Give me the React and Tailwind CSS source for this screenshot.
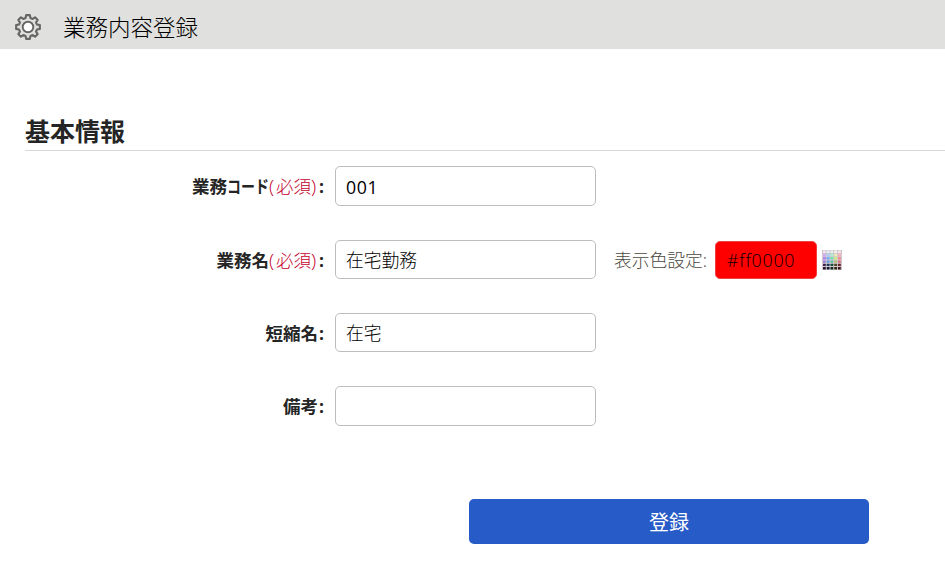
import React, { useState } from 'react';

// 8 teeth, outlined body with a white hole in the middle
const TEETH = 8;
const gearPoint = (radius, degrees) => {
  const rad = ((degrees - 90) * Math.PI) / 180;
  return `${(14 + radius * Math.cos(rad)).toFixed(2)},${(14 + radius * Math.sin(rad)).toFixed(2)}`;
};
const gearOutline = Array.from({ length: TEETH }, (_, i) => {
  const a = (i * 360) / TEETH;
  return [gearPoint(9.3, a - 15), gearPoint(12, a - 9), gearPoint(12, a + 9), gearPoint(9.3, a + 15)].join(' ');
}).join(' ');

const GearIcon = () => (
  <svg className="w-7 h-7 shrink-0" viewBox="0 0 28 28" fill="none" stroke="#666" strokeLinejoin="round">
    <polygon points={gearOutline} strokeWidth="2.1" />
    <circle cx="14" cy="14" r="5.3" fill="#fff" strokeWidth="1.9" />
  </svg>
);

const PALETTE = [
  ['#f0e6f2', '#e6f0f4', '#e4f4ea', '#f4f2e4', '#f4e4e4'],
  ['#cfaef2', '#a8d0f8', '#b0eed2', '#f2ecb0', '#f6b0b6'],
  ['#b080f4', '#6cb0fa', '#70e4a8', '#d2ec80', '#fa8a8a'],
  ['#9a80dc', '#5c9cdc', '#5cc49c', '#bcc070', '#dc6c74'],
  ['#3a2048', '#1c3858', '#185038', '#504820', '#682028'],
  ['#281428', '#101c30', '#102a1c', '#2c280c', '#38100e'],
];

const PaletteIcon = () => (
  <svg className="w-5 h-5 shrink-0" viewBox="0 0 20 20">
    <rect width="20" height="20" fill="#cfc6d0" />
    {PALETTE.map((row, y) =>
      row.map((color, x) => (
        <rect key={`${x}-${y}`} x={1 + x * 3.75} y={0.5 + y * 3.3} width="2.8" height="2.4" rx="0.5" fill={color} />
      ))
    )}
  </svg>
);

const inputBase = 'border rounded-[5px] outline-none';

const FormRow = ({ label, required, height, inputClass = 'font-light', value, onChange, children }) => (
  <div className="flex items-center">
    <label className="w-[325px] pr-px text-right text-[17.5px] leading-6 font-bold text-[#252525] whitespace-nowrap">
      {label}
      {required && (
        <span className="font-light text-[#c4002c]">
          <span className="inline-block w-[7px] text-left text-[19px] leading-5">(</span>
          必須
          <span className="inline-block w-[7px] text-left text-[19px] leading-5">)</span>
        </span>
      )}
      <span className="inline-block w-[6px]">:</span>
    </label>
    <input
      type="text"
      value={value}
      onChange={(e) => onChange(e.target.value)}
      className={`${inputBase} ${height} ${inputClass} ml-[10px] w-[261px] px-[10px] text-[17.75px] text-black bg-white border-[#bdbdbd]`}
    />
    {children}
  </div>
);

const App = () => {
  const [form, setForm] = useState({ code: '001', name: '在宅勤務', shortName: '在宅', note: '' });
  const [color, setColor] = useState('#ff0000');

  const update = (key) => (value) => setForm({ ...form, [key]: value });

  return (
    <div className="h-[579px] overflow-hidden bg-white font-['Open_Sans','Noto_Sans_CJK_JP',sans-serif]">
      {/* Page header */}
      <header className="flex items-center h-[49px] pl-[14px] pt-[5px] bg-[#e0e0de]">
        <GearIcon />
        <h1 className="ml-[21px] pt-px text-[22.5px] leading-8 font-light text-black">業務内容登録</h1>
      </header>

      <main className="pt-[64px]">
        <h2 className="ml-[25px] h-[38px] border-b border-[#d8d8d8] text-[25px] leading-[36px] font-bold text-[#252525]">
          基本情報
        </h2>

        {/* Form fields */}
        <div className="flex flex-col gap-[34px] pt-[15px]">
          <FormRow
            label={<>業務<span className="inline-block w-[42px] text-left"><span className="inline-block origin-left scale-x-80">コード</span></span></>}
            required
            height="h-[40px]"
            inputClass="pt-[2px] tracking-[0.6px] font-normal"
            value={form.code}
            onChange={update('code')}
          />
          <FormRow label="業務名" required height="h-[39px]" inputClass="pb-[2px] font-light" value={form.name} onChange={update('name')}>
            <span className="ml-[18px] w-[101px] pt-px text-[17.75px] font-light text-[#4a4940] whitespace-nowrap">表示色設定:</span>
            <input
              type="text"
              value={color}
              onChange={(e) => setColor(e.target.value)}
              className={`${inputBase} h-[38px] w-[102px] px-[11px] text-[17.75px] tracking-[0.8px] font-light text-black bg-[#ff0000] border-[#f04040]`}
            />
            <button type="button" className="ml-[5px]" aria-label="表示色設定">
              <PaletteIcon />
            </button>
          </FormRow>
          <FormRow label="短縮名" height="h-[39px]" inputClass="pb-[2px] font-light" value={form.shortName} onChange={update('shortName')} />
          <FormRow label="備考" height="h-[40px]" value={form.note} onChange={update('note')} />
        </div>

        <button
          type="button"
          className="block mt-[73px] ml-[469px] w-[400px] h-[45px] pt-[2px] rounded-[5px] bg-[#275bc8] text-[20px] text-white"
        >
          登録
        </button>
      </main>
    </div>
  );
};

export default App;
